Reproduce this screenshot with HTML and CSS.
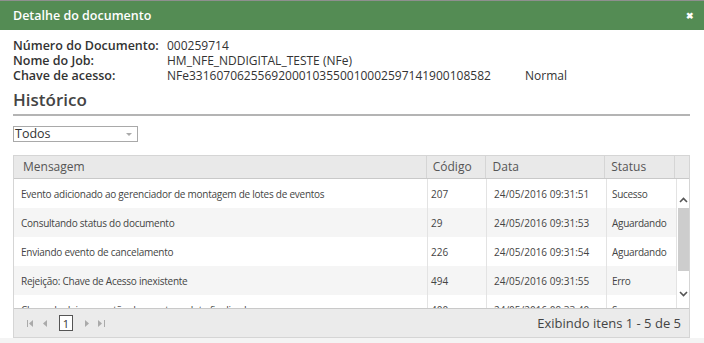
FILE: index.html
```html
<!DOCTYPE html>
<html lang="pt-BR">

<head>
  <meta charset="UTF-8">
  <meta name="viewport" content="width=device-width, initial-scale=1.0">
  <title>Detalhe do documento</title>

  <link rel="stylesheet" href="styles.css">
</head>

<body>
  <div class="window">
    <div class="titlebar">
      <span class="title">Detalhe do documento</span>
      <span class="close">&#x2716;</span>
    </div>

    <div class="content">
      <div class="info">
        <span class="label">Número do Documento:</span>
        <span class="value">000259714</span>
        <span></span>
        <span class="label">Nome do Job:</span>
        <span class="value">HM_NFE_NDDIGITAL_TESTE (NFe)</span>
        <span></span>
        <span class="label">Chave de acesso:</span>
        <span class="value">NFe33160706255692000103550010002597141900108582</span>
        <span class="value">Normal</span>
      </div>

      <h2 class="section">Histórico</h2>

      <div class="select">
        <span>Todos</span>
        <span class="caret"></span>
      </div>

      <div class="grid">
        <div class="grid-head">
          <div class="cell c-msg">Mensagem</div>
          <div class="cell c-cod">Código</div>
          <div class="cell c-data">Data</div>
          <div class="cell c-status">Status</div>
          <div class="cell c-scroll"></div>
        </div>

        <div class="grid-body">
          <div class="rows">
            <div class="row">
              <div class="cell c-msg">Evento adicionado ao gerenciador de montagem de lotes de eventos</div>
              <div class="cell c-cod">207</div>
              <div class="cell c-data">24/05/2016 09:31:51</div>
              <div class="cell c-status">Sucesso</div>
            </div>
            <div class="row alt">
              <div class="cell c-msg">Consultando status do documento</div>
              <div class="cell c-cod">29</div>
              <div class="cell c-data">24/05/2016 09:31:53</div>
              <div class="cell c-status">Aguardando</div>
            </div>
            <div class="row">
              <div class="cell c-msg">Enviando evento de cancelamento</div>
              <div class="cell c-cod">226</div>
              <div class="cell c-data">24/05/2016 09:31:54</div>
              <div class="cell c-status">Aguardando</div>
            </div>
            <div class="row alt">
              <div class="cell c-msg">Rejeição: Chave de Acesso inexistente</div>
              <div class="cell c-cod">494</div>
              <div class="cell c-data">24/05/2016 09:31:55</div>
              <div class="cell c-status">Erro</div>
            </div>
            <div class="row">
              <div class="cell c-msg">Chave de deixa a gestão do evento no lote finalizado</div>
              <div class="cell c-cod">400</div>
              <div class="cell c-data">24/05/2016 09:33:40</div>
              <div class="cell c-status">Sucesso</div>
            </div>
          </div>

          <div class="scrollbar">
            <div class="sb-btn sb-up">
              <svg width="9" height="6" viewBox="0 0 9 6"><path d="M1 5 L4.5 1.5 L8 5" fill="none" stroke="#555" stroke-width="1.6"/></svg>
            </div>
            <div class="sb-thumb"></div>
            <div class="sb-track"></div>
            <div class="sb-btn sb-down">
              <svg width="9" height="6" viewBox="0 0 9 6"><path d="M1 1 L4.5 4.5 L8 1" fill="none" stroke="#555" stroke-width="1.6"/></svg>
            </div>
          </div>
        </div>

        <div class="pager">
          <div class="pager-nav">
            <svg class="pg-icon" width="7" height="7" viewBox="0 0 7 7"><rect x="0" y="0" width="1" height="7" fill="#aaa"/><path d="M6 0 L2 3.5 L6 7 Z" fill="#aaa"/></svg>
            <svg class="pg-icon" width="5" height="7" viewBox="0 0 5 7"><path d="M4 0 L0 3.5 L4 7 Z" fill="#aaa"/></svg>
            <span class="pg-page">1</span>
            <svg class="pg-icon" width="5" height="7" viewBox="0 0 5 7"><path d="M1 0 L5 3.5 L1 7 Z" fill="#aaa"/></svg>
            <svg class="pg-icon" width="7" height="7" viewBox="0 0 7 7"><path d="M0 0 L4 3.5 L0 7 Z" fill="#aaa"/><rect x="6" y="0" width="1" height="7" fill="#aaa"/></svg>
          </div>
          <span class="pager-info">Exibindo itens 1 - 5 de 5</span>
        </div>
      </div>
    </div>

    <div class="footer"></div>
  </div>
</body>

</html>
```

FILE: styles.css
```css
body {
  margin: 0;
  font-family: "Open Sans", "Noto Sans", sans-serif;
  color: #333;
  background: #fff;
}

.window {
  width: 704px;
  height: 343px;
  border-top: 1px solid #8f8f8f;
  box-sizing: border-box;
  display: flex;
  flex-direction: column;
  overflow: hidden;
}

.titlebar {
  height: 29px;
  flex-shrink: 0;
  background-color: #548c54;
  color: #fff;
  display: flex;
  align-items: center;
  justify-content: space-between;
  padding: 0 10px 0 13px;
}

.title {
  font-size: 12.5px;
  font-weight: 600;
}

.close {
  font-size: 9px;
  font-weight: bold;
}

.content {
  padding: 8px 14px 0 13px;
}

.info {
  display: grid;
  grid-template-columns: 154px 358px auto;
  font-size: 12.5px;
  line-height: 15px;
}

.info .label {
  font-weight: 600;
  color: #333;
}

.info .value {
  font-size: 12px;
  color: #333;
}

.section {
  margin: 7px 0 0 0;
  font-size: 17px;
  font-weight: 600;
  color: #444;
  line-height: 20px;
  padding-bottom: 4px;
  border-bottom: 2px solid #b4b4b4;
}

.select {
  margin-top: 10px;
  width: 125px;
  height: 16px;
  box-sizing: border-box;
  border: 1px solid #a9a9a9;
  display: flex;
  align-items: center;
  justify-content: space-between;
  font-size: 12.5px;
  color: #333;
  line-height: 14px;
}

.select span:first-child {
  padding-left: 1px;
}

.caret {
  width: 0;
  height: 0;
  border-left: 3px solid transparent;
  border-right: 3px solid transparent;
  border-top: 3px solid #aaa;
  margin-right: 5px;
}

.grid {
  margin-top: 13px;
  border: 1px solid #d5d5d5;
  border-bottom: none;
}

.grid-head {
  display: flex;
  height: 23px;
  background-color: #e9e9e9;
  border-bottom: 1px solid #c9c9c9;
  box-sizing: border-box;
  font-size: 12px;
  color: #555;
}

.grid-head .cell {
  border-left: 1px solid #d5d5d5;
  display: flex;
  align-items: center;
  line-height: 14px;
}

.grid-head .c-msg {
  border-left: none;
  padding-left: 9px;
}

.cell {
  box-sizing: border-box;
  padding-left: 7px;
  white-space: nowrap;
  overflow: hidden;
}

.c-msg {
  width: 413px;
}

.c-cod {
  width: 59px;
}

.grid-head .c-cod {
  padding-left: 6px;
}

.c-data {
  width: 120px;
}

.c-status {
  width: 70px;
  padding-left: 6px;
}

.c-scroll {
  width: 15px;
}

.grid-body {
  display: flex;
  height: 129px;
  overflow: hidden;
}

.rows {
  width: 662px;
}

.row {
  display: flex;
  height: 29px;
  font-size: 10px;
  color: #444;
}

.row.alt {
  background-color: #f5f5f5;
}

.row .cell {
  display: flex;
  align-items: center;
  border-left: 1px solid #e3e3e3;
}

.row .c-msg {
  border-left: none;
  letter-spacing: -0.25px;
}

.row .c-cod {
  padding-left: 3px;
}

.row .c-status {
  padding-left: 5px;
  letter-spacing: -0.3px;
}

.scrollbar {
  width: 15px;
  border-left: 1px solid #e3e3e3;
  box-sizing: border-box;
  display: flex;
  flex-direction: column;
  background: #fff;
}

.sb-btn {
  display: flex;
  justify-content: center;
}

.sb-up {
  height: 29px;
  align-items: flex-end;
  padding-bottom: 5px;
  box-sizing: border-box;
}

.sb-thumb {
  height: 63px;
  margin-left: 1px;
  background-color: #cdcdcd;
}

.sb-track {
  flex: 1;
}

.sb-down {
  height: 22px;
  align-items: flex-start;
  padding-top: 5px;
  box-sizing: border-box;
}

.pager {
  height: 30px;
  background-color: #ebebeb;
  border-top: 1px solid #c9c9c9;
  border-bottom: 1px solid #d5d5d5;
  box-sizing: border-box;
  display: flex;
  align-items: center;
  justify-content: space-between;
  padding: 0 8px 0 13px;
}

.pager-nav {
  display: flex;
  align-items: center;
  gap: 9px;
}

.pg-page {
  width: 14px;
  height: 16px;
  box-sizing: border-box;
  border: 1px solid #555;
  font-size: 11px;
  color: #333;
  display: flex;
  align-items: center;
  justify-content: center;
  background: #fff;
  margin: 0 2px;
}

.pager-info {
  font-size: 13px;
  color: #444;
}

.footer {
  flex: 1;
  background-color: #f4f4f4;
}
```
